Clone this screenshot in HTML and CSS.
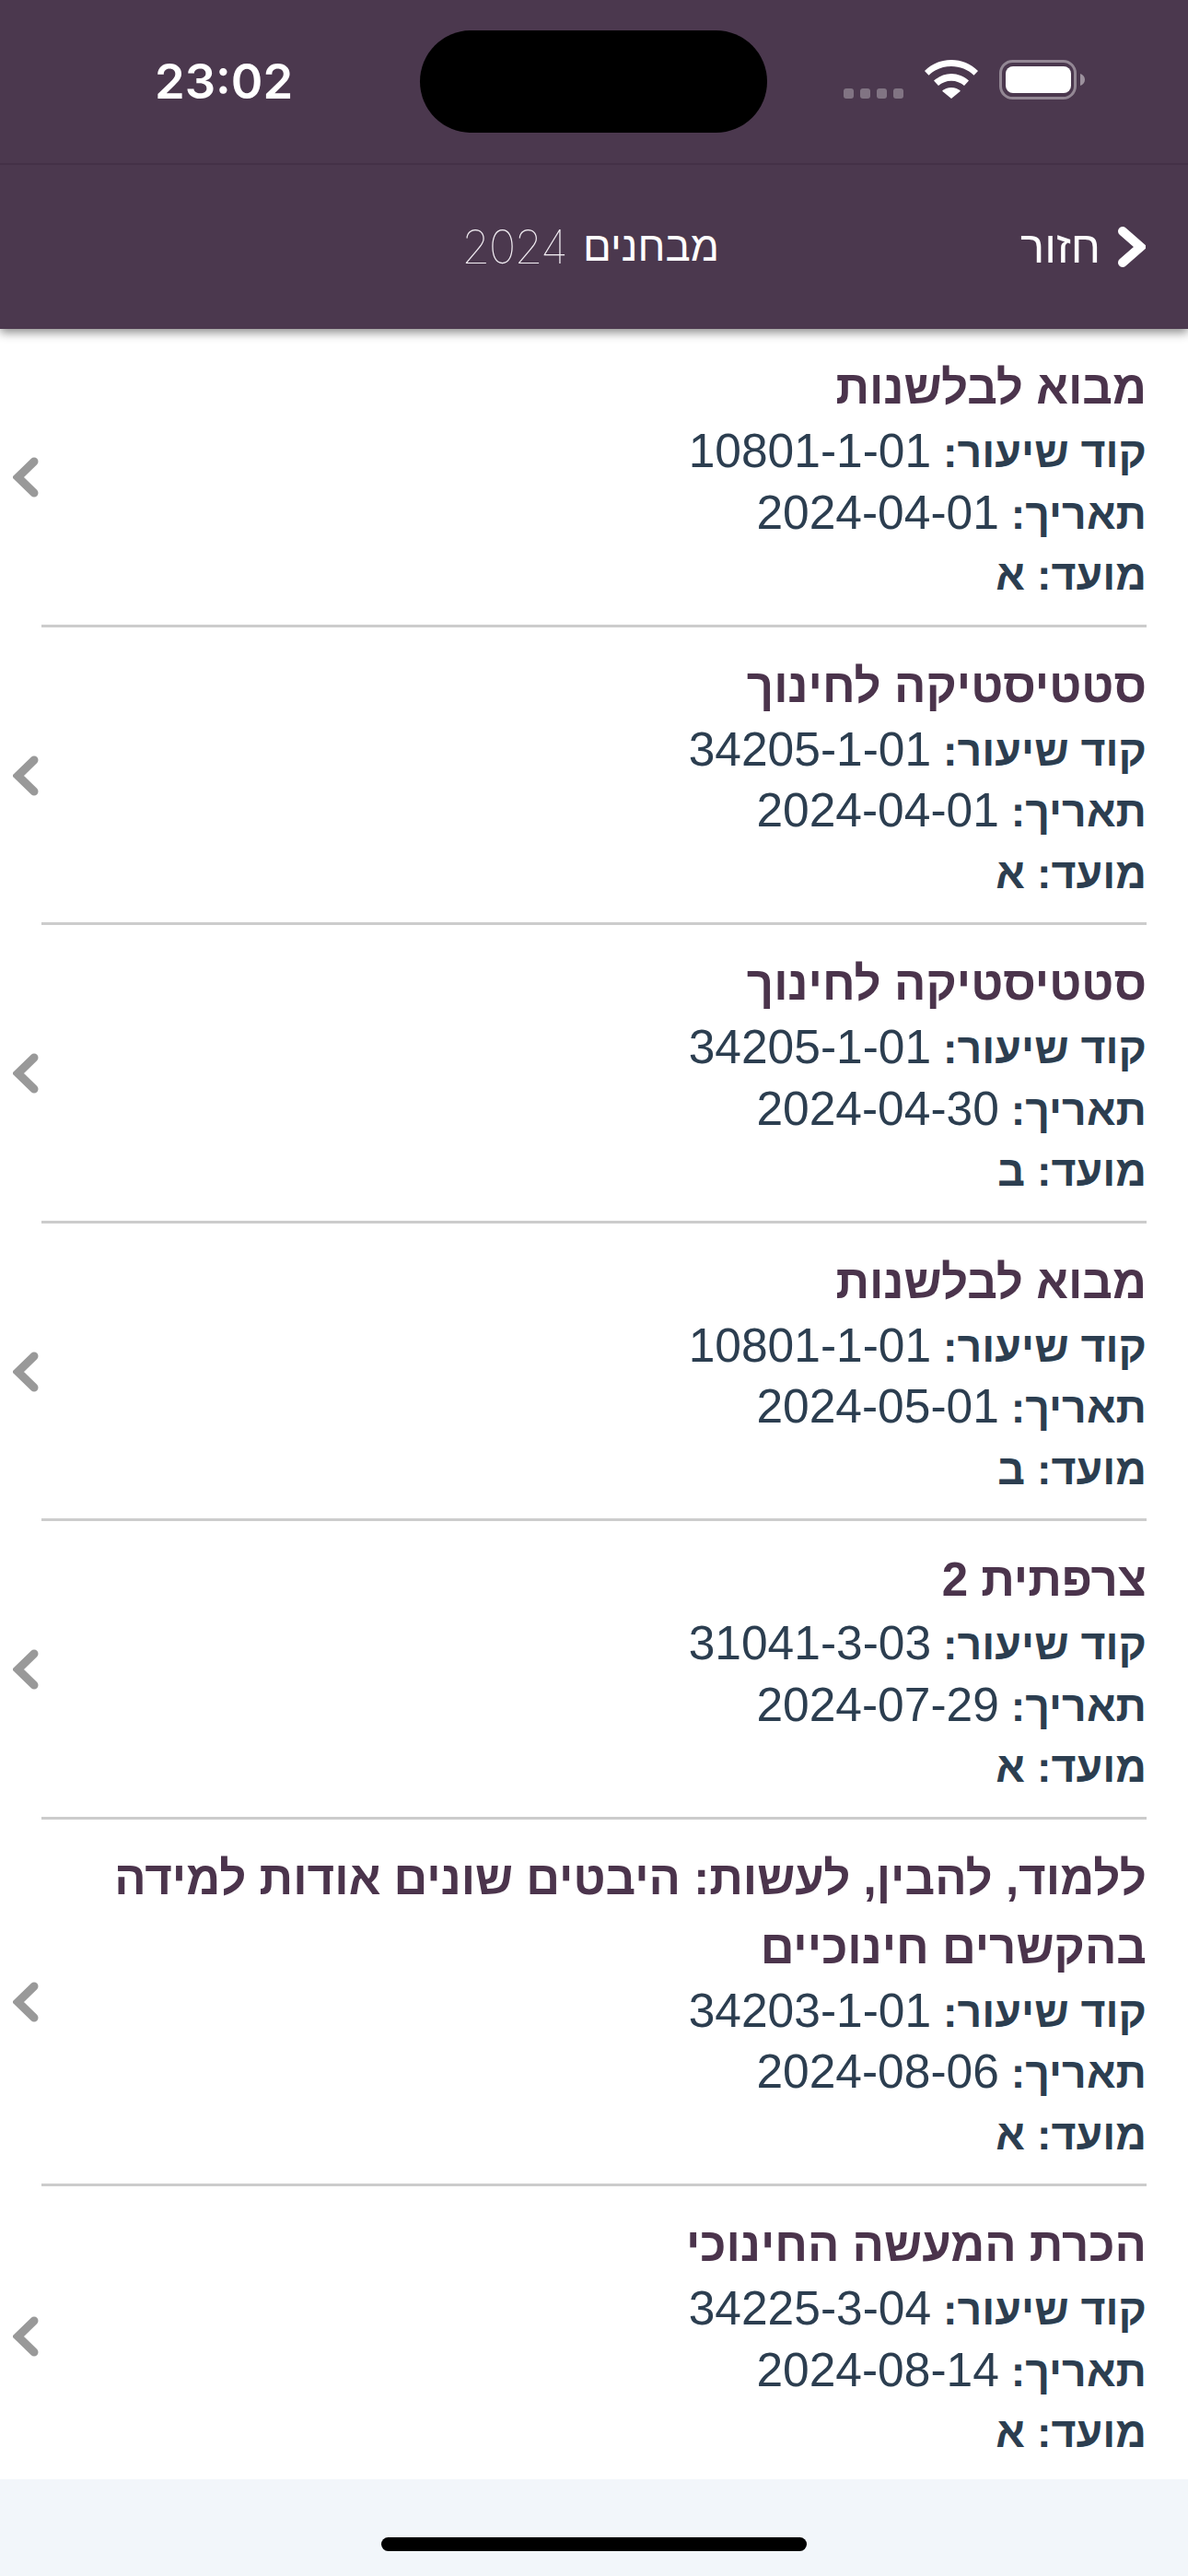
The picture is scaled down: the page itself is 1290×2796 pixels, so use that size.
FILE: index.html
```html
<!DOCTYPE html>
<html lang="he" dir="rtl">
<head>
<meta charset="utf-8">
<title>מבחנים 2024</title>
<link rel="stylesheet" href="styles.css">
</head>
<body>
<div class="phone">
  <header class="top">
    <div class="status" dir="ltr">
      <span class="time">23:02</span>
      <div class="island"></div>
      <div class="indicators">
        <div class="signal"><i></i><i></i><i></i><i></i></div>
        <svg class="wifi" width="58" height="42" viewBox="0 0 58 42"><path fill="#fff" d="M29 0C18 0 8 4 0 12l4.500 4.800C11 10.500 19.500 7 29 7s18 3.500 24.500 9.800L58 12C50 4 40 0 29 0z"/><path fill="#fff" d="M29 15c-7 0-13.500 2.800-19 7.500l5 5.500c3.800-3.300 8.700-5.300 14-5.300s10.200 2 14 5.300l5-5.500C42.500 17.800 36 15 29 15z"/><path fill="#fff" d="M29 30c-4 0-7.500 1.400-10 3.800L29 42l10-8.200C36.500 31.400 33 30 29 30z"/></svg>
        <svg class="battery" width="93" height="43" viewBox="0 0 93 43"><rect x="1.500" y="1.500" width="81" height="40" rx="13" fill="none" stroke="#fff" stroke-opacity=".4" stroke-width="3"/><rect x="7" y="7" width="71" height="29" rx="8" fill="#fff"/><path d="M88 15c3 1 5 3.500 5 6.500s-2 5.500-5 6.500z" fill="#fff" fill-opacity=".45"/></svg>
      </div>
    </div>
    <nav class="nav">
      <div class="back">
        <svg class="back-icon" width="31" height="46" viewBox="0 0 31 46"><path d="M6 6l19.500 17L6 40" fill="none" stroke="#fff" stroke-width="10" stroke-linecap="round"/></svg>
        <span>חזור</span>
      </div>
      <div class="title"><span>מבחנים</span> <span class="year">2024</span></div>
    </nav>
  </header>
  <main class="list">
    <article class="item">
      <div class="body"><h2>מבוא לבלשנות</h2><p><b>קוד שיעור:</b> <bdi>10801-1-01</bdi></p><p><b>תאריך:</b> <bdi>2024-04-01</bdi></p><p><b>מועד: א</b></p></div>
      <svg class="chev" width="28" height="44" viewBox="0 0 28 44"><path d="M23 5L5.500 22 23 39" fill="none" stroke="#999" stroke-width="9" stroke-linecap="round"/></svg>
    </article>
    <article class="item">
      <div class="body"><h2>סטטיסטיקה לחינוך</h2><p><b>קוד שיעור:</b> <bdi>34205-1-01</bdi></p><p><b>תאריך:</b> <bdi>2024-04-01</bdi></p><p><b>מועד: א</b></p></div>
      <svg class="chev" width="28" height="44" viewBox="0 0 28 44"><path d="M23 5L5.500 22 23 39" fill="none" stroke="#999" stroke-width="9" stroke-linecap="round"/></svg>
    </article>
    <article class="item">
      <div class="body"><h2>סטטיסטיקה לחינוך</h2><p><b>קוד שיעור:</b> <bdi>34205-1-01</bdi></p><p><b>תאריך:</b> <bdi>2024-04-30</bdi></p><p><b>מועד: ב</b></p></div>
      <svg class="chev" width="28" height="44" viewBox="0 0 28 44"><path d="M23 5L5.500 22 23 39" fill="none" stroke="#999" stroke-width="9" stroke-linecap="round"/></svg>
    </article>
    <article class="item">
      <div class="body"><h2>מבוא לבלשנות</h2><p><b>קוד שיעור:</b> <bdi>10801-1-01</bdi></p><p><b>תאריך:</b> <bdi>2024-05-01</bdi></p><p><b>מועד: ב</b></p></div>
      <svg class="chev" width="28" height="44" viewBox="0 0 28 44"><path d="M23 5L5.500 22 23 39" fill="none" stroke="#999" stroke-width="9" stroke-linecap="round"/></svg>
    </article>
    <article class="item">
      <div class="body"><h2>צרפתית 2</h2><p><b>קוד שיעור:</b> <bdi>31041-3-03</bdi></p><p><b>תאריך:</b> <bdi>2024-07-29</bdi></p><p><b>מועד: א</b></p></div>
      <svg class="chev" width="28" height="44" viewBox="0 0 28 44"><path d="M23 5L5.500 22 23 39" fill="none" stroke="#999" stroke-width="9" stroke-linecap="round"/></svg>
    </article>
    <article class="item">
      <div class="body"><h2>ללמוד, להבין, לעשות: היבטים שונים אודות למידה בהקשרים חינוכיים</h2><p><b>קוד שיעור:</b> <bdi>34203-1-01</bdi></p><p><b>תאריך:</b> <bdi>2024-08-06</bdi></p><p><b>מועד: א</b></p></div>
      <svg class="chev" width="28" height="44" viewBox="0 0 28 44"><path d="M23 5L5.500 22 23 39" fill="none" stroke="#999" stroke-width="9" stroke-linecap="round"/></svg>
    </article>
    <article class="item last">
      <div class="body"><h2>הכרת המעשה החינוכי</h2><p><b>קוד שיעור:</b> <bdi>34225-3-04</bdi></p><p><b>תאריך:</b> <bdi>2024-08-14</bdi></p><p><b>מועד: א</b></p></div>
      <svg class="chev" width="28" height="44" viewBox="0 0 28 44"><path d="M23 5L5.500 22 23 39" fill="none" stroke="#999" stroke-width="9" stroke-linecap="round"/></svg>
    </article>
  </main>
  <footer class="home"><div class="indicator"></div></footer>
</div>
</body>
</html>
```

FILE: styles.css
```css
* { box-sizing: border-box; }
html, body { margin: 0; padding: 0; }
body { font-family: "Liberation Sans", Arial, sans-serif; background: #fff; }
.phone { width: 1290px; height: 2796px; display: flex; flex-direction: column; overflow: hidden; }
.top { background: #4b384e; height: 357px; box-shadow: 0 4px 10px rgba(0,0,0,.45); position: relative; z-index: 2; flex: none; }
.status { height: 179px; border-bottom: 2px solid #443147; position: relative; }
.time { position: absolute; left: 168px; top: 62px; color: #fff; font-size: 52.500px; font-weight: 600; line-height: 52px; font-family: Inter, "Liberation Sans", sans-serif; }
.island { position: absolute; left: 456px; top: 33px; width: 377px; height: 111px; border-radius: 56px; background: #000; }
.indicators { position: absolute; left: 916px; top: 65px; display: flex; align-items: flex-start; gap: 23px; }
.signal { display: flex; gap: 7px; margin-top: 31px; }
.signal i { width: 11px; height: 11px; border-radius: 3px; background: rgba(255,255,255,.3); }
.nav { height: 178px; display: flex; align-items: center; color: #fff; }
.back { display: flex; align-items: center; gap: 18px; font-size: 49px; margin-right: 46px; }
.back-icon { flex: none; }
.title { margin-right: 327px; font-size: 45.500px; line-height: 60px; display: flex; gap: 18px; }
.year { font-weight: 100; font-family: Inter, sans-serif; font-size: 50px; letter-spacing: -1.700px; color: #f4f0f5; }
.list { flex: none; background: #fff; }
.item { margin: 0 45px; padding: 26px 0 20px; border-bottom: 3px solid #ccc; display: flex; align-items: center; }
.item.last { border-bottom: 0; padding-bottom: 17.500px; }
.body { color: #2c3e50; flex: 1; }
h2 { margin: 0; color: #4b344c; font-size: 51px; font-weight: 700; line-height: 75px; }
p { margin: 0; font-size: 46.500px; line-height: 66.500px; }
b { font-weight: 700; }
bdi { font-size: 51.500px; line-height: 0; }
.chev { flex: none; margin-inline: 0 -31px; margin-bottom: 4px; }
.item.last .chev { margin-top: 0; margin-bottom: 0; }
.home { flex: 1; background: #f2f6fa; position: relative; }
.indicator { position: absolute; left: 414px; top: 63px; width: 462px; height: 15px; border-radius: 8px; background: #000; }
```
